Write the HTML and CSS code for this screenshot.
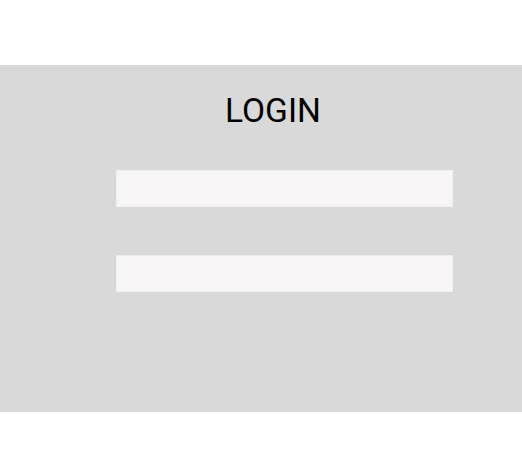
FILE: index.html
```html
<!DOCTYPE html>
<html lang="en">
<head>
  <meta charset="UTF-8" />
  <meta name="viewport" content="width=device-width, initial-scale=1.0"/>
  <title>Login</title>
  <link rel="stylesheet" href="styles.css">
</head>
<body>

<div class="login-box">
  <h2 class="login-title">LOGIN</h2>
  <form class="login-form">
    <input type="text" class="login-input" />
    <input type="password" class="login-input" />
  </form>
</div>

</body>
</html>
```

FILE: styles.css
```css
body {
  font-family: Roboto, 'Noto Sans', sans-serif;
  background: #ffffff;
  color: #000000;
  margin: 0;
  padding: 0;
}

.login-box {
  margin-top: 65px;
  height: 347px;
  background: #d9d9d9;
  padding-top: 27px;
  box-sizing: border-box;
}

.login-title {
  margin: 0;
  padding-left: 24px;
  font-size: 33.5px;
  font-weight: 400;
  line-height: 38px;
  text-align: center;
}

.login-form {
  display: flex;
  flex-direction: column;
  gap: 48px;
  margin: 40px 0 0 116px;
  width: 337px;
}

.login-input {
  box-sizing: border-box;
  width: 100%;
  height: 37px;
  margin: 0;
  padding: 0 10px;
  background: #f7f5f6;
  border: 1px solid #efeded;
  border-radius: 0;
  outline: none;
}
```
